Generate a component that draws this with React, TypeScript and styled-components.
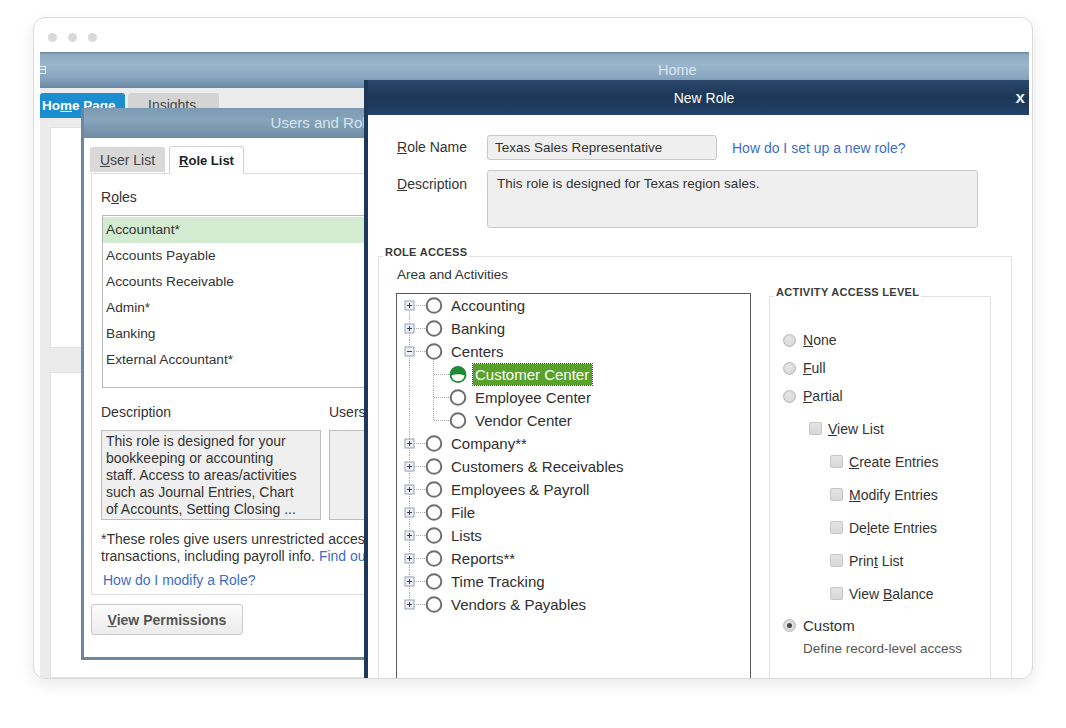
import React from 'react';
import styled, { createGlobalStyle } from 'styled-components';

const GlobalStyle = createGlobalStyle`
  html, body {
    margin: 0;
    padding: 0;
    background: #fff;
  }
  body {
    font-family: "Liberation Sans", Arial, sans-serif;
    color: #333;
  }
  * {
    box-sizing: border-box;
  }
`;

const Page = styled.div`
  width: 1066px;
  height: 728px;
  padding: 17px 0 0 33px;
  overflow: hidden;
`;

const Frame = styled.div`
  width: 1000px;
  height: 662px;
  border: 1px solid #dadada;
  border-radius: 12px;
  background: #fff;
  box-shadow: 0 5px 16px rgba(0, 0, 0, 0.09);
  display: flex;
  flex-direction: column;
  overflow: hidden;
`;

const TopBar = styled.div`
  height: 34px;
  flex-shrink: 0;
  display: flex;
  align-items: center;
  gap: 11px;
  padding: 4px 0 0 14px;
`;

const Dot = styled.span`
  width: 9px;
  height: 9px;
  border-radius: 50%;
  background: #d9d9d9;
`;

const AppArea = styled.div`
  flex: 1;
  margin: 0 3px 0 6px;
  position: relative;
  overflow: hidden;
  display: flex;
  flex-direction: column;
`;

/* ---------- main QuickBooks window behind the dialogs ---------- */

const MainTitleBar = styled.div`
  height: 36px;
  flex-shrink: 0;
  display: flex;
  align-items: center;
  background: linear-gradient(180deg, #6e879c 0%, #8eabc2 8%, #9ab6cc 35%, #88a6bf 70%, #6d8aa3 100%);
  color: #dbe5ee;
  font-size: 14.5px;
`;

const MainTitle = styled.span`
  margin-left: 610px;
`;

const TabStrip = styled.div`
  height: 30px;
  flex-shrink: 0;
  display: flex;
  align-items: flex-end;
  gap: 3px;
  background: #ececec;
`;

const MainTab = styled.div<{ $active?: boolean }>`
  height: 25px;
  line-height: 25px;
  width: ${(p) => (p.$active ? '85px' : '91px')};
  padding-left: ${(p) => (p.$active ? '2px' : '20px')};
  border-radius: 3px 3px 0 0;
  background: ${(p) => (p.$active ? '#1b8dd0' : '#d4d4d4')};
  color: ${(p) => (p.$active ? '#fff' : '#444')};
  font-size: ${(p) => (p.$active ? '13.5px' : '14px')};
  font-weight: ${(p) => (p.$active ? 'bold' : 'normal')};
  white-space: nowrap;
`;

const Workspace = styled.div`
  flex: 1;
  background: #ebebeb;
  padding: 9px 0 0 10px;
  display: flex;
  flex-direction: column;
  gap: 24px;
`;

const WorkPanel = styled.div<{ $height?: number }>`
  width: 420px;
  background: #fff;
  border: 1px solid #e2e2e2;
  ${(p) => (p.$height ? `height: ${p.$height}px;` : 'flex: 1;')}
`;

/* ---------- Users and Roles window ---------- */

const UsersWindow = styled.section`
  position: absolute;
  left: 41px;
  top: 56px;
  width: 490px;
  height: 552px;
  border: 3px solid #6a879f;
  border-top: 0;
  background: #fff;
  display: flex;
  flex-direction: column;
`;

const SteelTitle = styled.div`
  height: 30px;
  flex-shrink: 0;
  line-height: 30px;
  text-align: center;
  background: linear-gradient(180deg, #7c9ab3 0%, #87a4bc 40%, #6e8ca5 100%);
  color: #d8e3ec;
  font-size: 15px;
`;

const UsersBody = styled.div`
  padding: 8px 0 0 6px;
  display: flex;
  flex-direction: column;
`;

const DialogTabs = styled.div`
  display: flex;
  align-items: flex-end;
  gap: 4px;
`;

const DialogTab = styled.div<{ $active?: boolean }>`
  width: 75px;
  height: ${(p) => (p.$active ? '28px' : '25px')};
  line-height: ${(p) => (p.$active ? '27px' : '25px')};
  text-align: center;
  border: 1px solid ${(p) => (p.$active ? '#d2d2d2' : '#d6d6d6')};
  border-bottom: 0;
  border-radius: 3px 3px 0 0;
  background: ${(p) => (p.$active ? '#fff' : '#d9d9d9')};
  color: ${(p) => (p.$active ? '#222' : '#444')};
  font-size: ${(p) => (p.$active ? '13px' : '14px')};
  font-weight: ${(p) => (p.$active ? 'bold' : 'normal')};
  margin-bottom: ${(p) => (p.$active ? '-1px' : '1px')};
  position: relative;
  z-index: 1;
`;

const TabPanel = styled.div`
  margin-left: 1px;
  height: 422px;
  border: 1px solid #dcdcdc;
  padding: 15px 0 0 9px;
  font-size: 14px;
`;

const FieldLabel = styled.div`
  line-height: 16px;
  font-size: 14px;
  color: #333;
  white-space: nowrap;
`;

const RoleListBox = styled.div`
  margin: 10px 0 0 1px;
  width: 400px;
  height: 173px;
  border: 1px solid #b8b8b8;
  padding-top: 1px;
`;

const RoleItem = styled.div<{ $selected?: boolean }>`
  height: 26px;
  line-height: 26px;
  padding-left: 3px;
  font-size: 13.7px;
  color: #333;
  background: ${(p) => (p.$selected ? '#d3ebd0' : 'transparent')};
`;

const DescRow = styled.div`
  display: flex;
  gap: 8px;
  margin-top: 16px;
`;

const DescColumn = styled.div<{ $width: number }>`
  width: ${(p) => p.$width}px;
  display: flex;
  flex-direction: column;
  gap: 10px;
`;

const ReadOnlyBox = styled.div`
  height: 90px;
  background: #efefef;
  border: 1px solid #bdbdbd;
  padding: 2px 4px;
  font-size: 14px;
  line-height: 17px;
  color: #333;
  white-space: nowrap;
  overflow: hidden;
`;

const NoteText = styled.div`
  margin-top: 11px;
  font-size: 14px;
  line-height: 17px;
  color: #333;
  white-space: nowrap;
`;

const LinkText = styled.span`
  color: #3c6ec6;
`;

const HelpLink = styled.div`
  margin-top: 7px;
  padding-left: 2px;
  font-size: 14px;
  line-height: 17px;
  color: #3c6ec6;
`;

const PushButton = styled.button`
  margin: 9px 0 0 1px;
  width: 152px;
  height: 31px;
  border: 1px solid #c9c9c9;
  border-radius: 3px;
  background: linear-gradient(180deg, #fbfbfb, #ececec);
  font-family: "Liberation Sans", Arial, sans-serif;
  font-size: 14px;
  font-weight: bold;
  color: #555;
  padding: 0;
`;

/* ---------- New Role window ---------- */

const NewRoleWindow = styled.section`
  position: absolute;
  left: 324px;
  top: 28px;
  width: 676px;
  height: 700px;
  background: #fff;
  border-left: 4px solid #1d3858;
  display: flex;
  flex-direction: column;
`;

const NavyTitle = styled.div`
  height: 35px;
  flex-shrink: 0;
  display: grid;
  grid-template-columns: 1fr auto 1fr;
  align-items: center;
  background: linear-gradient(180deg, #2b486b 0%, #1c3656 50%, #24426a 100%);
  color: #fff;
  font-size: 14px;
`;

const TitleText = styled.span`
  grid-column: 2;
`;

const CloseButton = styled.span`
  grid-column: 3;
  justify-self: end;
  padding-right: 15px;
  font-size: 17px;
  font-weight: bold;
  color: #e6edf4;
  line-height: 1;
`;

const NewRoleBody = styled.div`
  flex: 1;
  padding: 20px 0 0 10px;
  display: flex;
  flex-direction: column;
`;

const FormGrid = styled.div`
  margin-left: 19px;
  display: grid;
  grid-template-columns: 90px 1fr;
  row-gap: 10px;
  align-items: start;
`;

const FormLabel = styled.div<{ $top?: number; $line?: number }>`
  padding-top: ${(p) => p.$top ?? 0}px;
  line-height: ${(p) => p.$line ?? 16}px;
  font-size: 14px;
  color: #333;
`;

const InlineRow = styled.div`
  display: flex;
  align-items: center;
`;

const TextInput = styled.div`
  width: 230px;
  height: 25px;
  line-height: 23px;
  padding-left: 7px;
  background: #efefef;
  border: 1px solid #c9c9c9;
  border-radius: 3px;
  font-size: 13.5px;
  color: #333;
`;

const InlineLink = styled.span`
  margin-left: 15px;
  font-size: 14px;
  color: #3c6ec6;
`;

const TextArea = styled.div`
  width: 491px;
  height: 58px;
  padding: 4px 9px;
  background: #efefef;
  border: 1px solid #c9c9c9;
  border-radius: 3px;
  font-size: 13.5px;
  line-height: 17px;
  color: #333;
`;

const GroupBox = styled.div<{ $width: number }>`
  width: ${(p) => p.$width}px;
  border: 1px solid #e3e3e3;
  border-bottom: 0;
  display: flex;
  flex-direction: column;
`;

const RoleAccessGroup = styled(GroupBox)`
  margin-top: 28px;
  flex: 1;
`;

const GroupTitle = styled.div`
  margin: -11px 0 0 4px;
  width: fit-content;
  padding: 0 2px;
  background: #fff;
  font-size: 11px;
  font-weight: bold;
  letter-spacing: 0.3px;
  line-height: 13px;
  color: #3a3a3a;
`;

const GroupInner = styled.div`
  display: flex;
  align-items: flex-start;
  padding: 8px 0 0 17px;
`;

const AreaColumn = styled.div`
  display: flex;
  flex-direction: column;
`;

const AreaLabel = styled.div`
  padding-left: 1px;
  line-height: 16px;
  font-size: 13.5px;
  color: #333;
`;

const TreeBox = styled.div`
  margin-top: 10px;
  width: 355px;
  height: 420px;
  border: 1px solid #5c5c5c;
`;

const TreeRow = styled.div`
  height: 23px;
  display: flex;
  align-items: center;
`;

const TreeLabel = styled.span<{ $active?: boolean }>`
  font-size: 15px;
  line-height: 21px;
  white-space: nowrap;
  color: ${(p) => (p.$active ? '#fff' : '#2f2f2f')};
  background: ${(p) => (p.$active ? '#58a22b' : 'transparent')};
  outline: ${(p) => (p.$active ? '1px dotted #2a5a14' : 'none')};
  padding: ${(p) => (p.$active ? '0 3px 0 2px' : '0')};
  margin-left: ${(p) => (p.$active ? '-2px' : '0')};
`;

const ActivityGroup = styled(GroupBox)`
  margin: 29px 0 0 18px;
  height: 420px;
`;

const ActivityList = styled.div`
  padding: 27px 0 0 13px;
  display: flex;
  flex-direction: column;
`;

const OptionRow = styled.div<{ $indent?: number; $height: number; $gap?: number }>`
  height: ${(p) => p.$height}px;
  margin-top: ${(p) => p.$gap ?? 0}px;
  padding-left: ${(p) => p.$indent ?? 0}px;
  display: flex;
  align-items: center;
  gap: 6px;
  font-size: 14px;
  color: #333;
  white-space: nowrap;
`;

const OptionText = styled.span<{ $size?: number }>`
  font-size: ${(p) => p.$size ?? 14}px;
`;

const RadioDot = styled.span<{ $checked?: boolean }>`
  width: 13px;
  height: 13px;
  flex-shrink: 0;
  margin-right: 1px;
  border-radius: 50%;
  border: 1px solid #b9b9b9;
  background: radial-gradient(circle at 45% 40%, #e8e8e8 0%, #cfcfcf 100%);
  display: flex;
  align-items: center;
  justify-content: center;
  &::after {
    content: '';
    display: ${(p) => (p.$checked ? 'block' : 'none')};
    width: 5px;
    height: 5px;
    border-radius: 50%;
    background: #4a4a4a;
  }
`;

const CheckSquare = styled.span`
  width: 13px;
  height: 13px;
  flex-shrink: 0;
  border-radius: 2px;
  border: 1px solid #c6c6c6;
  background: linear-gradient(180deg, #e4e4e4, #d8d8d8);
`;

const HintText = styled.div`
  padding-left: 20px;
  margin-top: 2px;
  line-height: 16px;
  font-size: 13.5px;
  color: #555;
  white-space: nowrap;
`;

/* ---------- tree drawing ---------- */

const DOT = { stroke: '#a9a9a9', strokeWidth: 1, strokeDasharray: '1 1' };

type TopNode = { label: string; open?: boolean; children?: { label: string; active?: boolean }[] };

const tree: TopNode[] = [
  { label: 'Accounting' },
  { label: 'Banking' },
  {
    label: 'Centers',
    open: true,
    children: [{ label: 'Customer Center', active: true }, { label: 'Employee Center' }, { label: 'Vendor Center' }],
  },
  { label: 'Company**' },
  { label: 'Customers & Receivables' },
  { label: 'Employees & Payroll' },
  { label: 'File' },
  { label: 'Lists' },
  { label: 'Reports**' },
  { label: 'Time Tracking' },
  { label: 'Vendors & Payables' },
];

const RingIcon = ({ cx }: { cx: number }) => (
  <circle cx={cx} cy={11.5} r={7.3} fill="#fff" stroke="#6f6f6f" strokeWidth={2} />
);

const PartialIcon = ({ cx }: { cx: number }) => (
  <g>
    <circle cx={cx} cy={11.5} r={8.4} fill="#1e8b37" />
    <path
      d={`M${cx - 6.6} 12.6 Q${cx} 9.8 ${cx + 6.6} 12.6 Q${cx + 5.6} 18 ${cx} 18.3 Q${cx - 5.6} 18 ${cx - 6.6} 12.6 Z`}
      fill="#fff"
    />
  </g>
);

const TopGutter = ({ first, last, open }: { first: boolean; last: boolean; open?: boolean }) => (
  <svg width={54} height={23} style={{ flexShrink: 0 }}>
    <line x1={12.5} x2={12.5} y1={first ? 11.5 : 0} y2={last ? 11.5 : 23} {...DOT} />
    {open && <line x1={36.5} x2={36.5} y1={19.5} y2={23} {...DOT} />}
    <line x1={17} x2={29} y1={11.5} y2={11.5} {...DOT} />
    <rect x={8} y={7} width={9} height={9} fill="#eef0f5" stroke="#97a3b6" strokeWidth={1} />
    <line x1={10} x2={15} y1={11.5} y2={11.5} stroke="#2f426a" strokeWidth={1} />
    {!open && <line x1={12.5} x2={12.5} y1={9} y2={14} stroke="#2f426a" strokeWidth={1} />}
    <RingIcon cx={37} />
  </svg>
);

const ChildGutter = ({ last, active }: { last: boolean; active?: boolean }) => (
  <svg width={78} height={23} style={{ flexShrink: 0 }}>
    <line x1={12.5} x2={12.5} y1={0} y2={23} {...DOT} />
    <line x1={36.5} x2={36.5} y1={0} y2={last ? 11.5 : 23} {...DOT} />
    <line x1={37} x2={53} y1={11.5} y2={11.5} {...DOT} />
    {active ? <PartialIcon cx={61} /> : <RingIcon cx={61} />}
  </svg>
);

const WindowIcon = () => (
  <svg width={8} height={10} style={{ flexShrink: 0 }}>
    <rect x={-3.5} y={1.5} width={9} height={7} fill="none" stroke="#e6edf3" strokeWidth={1} />
    <line x1={-3} x2={5} y1={4.5} y2={4.5} stroke="#e6edf3" strokeWidth={1} />
  </svg>
);

const roles = ['Accountant*', 'Accounts Payable', 'Accounts Receivable', 'Admin*', 'Banking', 'External Accountant*'];

const roleDescription = [
  'This role is designed for your',
  'bookkeeping or accounting',
  'staff. Access to areas/activities',
  'such as Journal Entries, Chart',
  'of Accounts, Setting Closing ...',
];

export default function App() {
  return (
    <>
      <GlobalStyle />
      <Page>
        <Frame>
          <TopBar>
            <Dot />
            <Dot />
            <Dot />
          </TopBar>

          <AppArea>
            <MainTitleBar>
              <WindowIcon />
              <MainTitle>Home</MainTitle>
            </MainTitleBar>
            <TabStrip>
              <MainTab $active>
                Ho<u>m</u>e Page
              </MainTab>
              <MainTab>Insights</MainTab>
            </TabStrip>
            <Workspace>
              <WorkPanel $height={221} />
              <WorkPanel />
            </Workspace>

            <UsersWindow>
              <SteelTitle>Users and Roles</SteelTitle>
              <UsersBody>
                <DialogTabs>
                  <DialogTab>
                    <u>U</u>ser List
                  </DialogTab>
                  <DialogTab $active>
                    <u>R</u>ole List
                  </DialogTab>
                </DialogTabs>
                <TabPanel>
                  <FieldLabel>
                    R<u>o</u>les
                  </FieldLabel>
                  <RoleListBox>
                    {roles.map((r, i) => (
                      <RoleItem key={r} $selected={i === 0}>
                        {r}
                      </RoleItem>
                    ))}
                  </RoleListBox>
                  <DescRow>
                    <DescColumn $width={220}>
                      <FieldLabel>Description</FieldLabel>
                      <ReadOnlyBox>
                        {roleDescription.map((line) => (
                          <div key={line}>{line}</div>
                        ))}
                      </ReadOnlyBox>
                    </DescColumn>
                    <DescColumn $width={200}>
                      <FieldLabel>Users</FieldLabel>
                      <ReadOnlyBox />
                    </DescColumn>
                  </DescRow>
                  <NoteText>
                    *These roles give users unrestricted access
                    <br />
                    transactions, including payroll info. <LinkText>Find out</LinkText>
                  </NoteText>
                  <HelpLink>How do I modify a Role?</HelpLink>
                </TabPanel>
                <PushButton>
                  <u>V</u>iew Permissions
                </PushButton>
              </UsersBody>
            </UsersWindow>

            <NewRoleWindow>
              <NavyTitle>
                <TitleText>New Role</TitleText>
                <CloseButton>x</CloseButton>
              </NavyTitle>
              <NewRoleBody>
                <FormGrid>
                  <FormLabel $line={25}>
                    <u>R</u>ole Name
                  </FormLabel>
                  <InlineRow>
                    <TextInput>Texas Sales Representative</TextInput>
                    <InlineLink>How do I set up a new role?</InlineLink>
                  </InlineRow>
                  <FormLabel $top={6}>
                    <u>D</u>escription
                  </FormLabel>
                  <TextArea>This role is designed for Texas region sales.</TextArea>
                </FormGrid>

                <RoleAccessGroup $width={634}>
                  <GroupTitle>ROLE ACCESS</GroupTitle>
                  <GroupInner>
                    <AreaColumn>
                      <AreaLabel>Area and Activities</AreaLabel>
                      <TreeBox>
                        {tree.map((node, i) => (
                          <React.Fragment key={node.label}>
                            <TreeRow>
                              <TopGutter first={i === 0} last={i === tree.length - 1} open={node.open} />
                              <TreeLabel>{node.label}</TreeLabel>
                            </TreeRow>
                            {node.children?.map((c, j) => (
                              <TreeRow key={c.label}>
                                <ChildGutter last={j === node.children!.length - 1} active={c.active} />
                                <TreeLabel $active={c.active}>{c.label}</TreeLabel>
                              </TreeRow>
                            ))}
                          </React.Fragment>
                        ))}
                      </TreeBox>
                    </AreaColumn>

                    <ActivityGroup $width={222}>
                      <GroupTitle>ACTIVITY ACCESS LEVEL</GroupTitle>
                      <ActivityList>
                        <OptionRow $height={28}>
                          <RadioDot />
                          <OptionText>
                            <u>N</u>one
                          </OptionText>
                        </OptionRow>
                        <OptionRow $height={28}>
                          <RadioDot />
                          <OptionText>
                            <u>F</u>ull
                          </OptionText>
                        </OptionRow>
                        <OptionRow $height={28}>
                          <RadioDot />
                          <OptionText>
                            <u>P</u>artial
                          </OptionText>
                        </OptionRow>
                        <OptionRow $height={33} $indent={26} $gap={2}>
                          <CheckSquare />
                          <OptionText>
                            <u>V</u>iew List
                          </OptionText>
                        </OptionRow>
                        <OptionRow $height={33} $indent={47}>
                          <CheckSquare />
                          <OptionText>
                            <u>C</u>reate Entries
                          </OptionText>
                        </OptionRow>
                        <OptionRow $height={33} $indent={47}>
                          <CheckSquare />
                          <OptionText>
                            <u>M</u>odify Entries
                          </OptionText>
                        </OptionRow>
                        <OptionRow $height={33} $indent={47}>
                          <CheckSquare />
                          <OptionText>
                            De<u>l</u>ete Entries
                          </OptionText>
                        </OptionRow>
                        <OptionRow $height={33} $indent={47}>
                          <CheckSquare />
                          <OptionText>
                            Prin<u>t</u> List
                          </OptionText>
                        </OptionRow>
                        <OptionRow $height={33} $indent={47}>
                          <CheckSquare />
                          <OptionText>
                            View <u>B</u>alance
                          </OptionText>
                        </OptionRow>
                        <OptionRow $height={28} $gap={1}>
                          <RadioDot $checked />
                          <OptionText $size={15}>Custom</OptionText>
                        </OptionRow>
                        <HintText>Define record-level access</HintText>
                      </ActivityList>
                    </ActivityGroup>
                  </GroupInner>
                </RoleAccessGroup>
              </NewRoleBody>
            </NewRoleWindow>
          </AppArea>
        </Frame>
      </Page>
    </>
  );
}
